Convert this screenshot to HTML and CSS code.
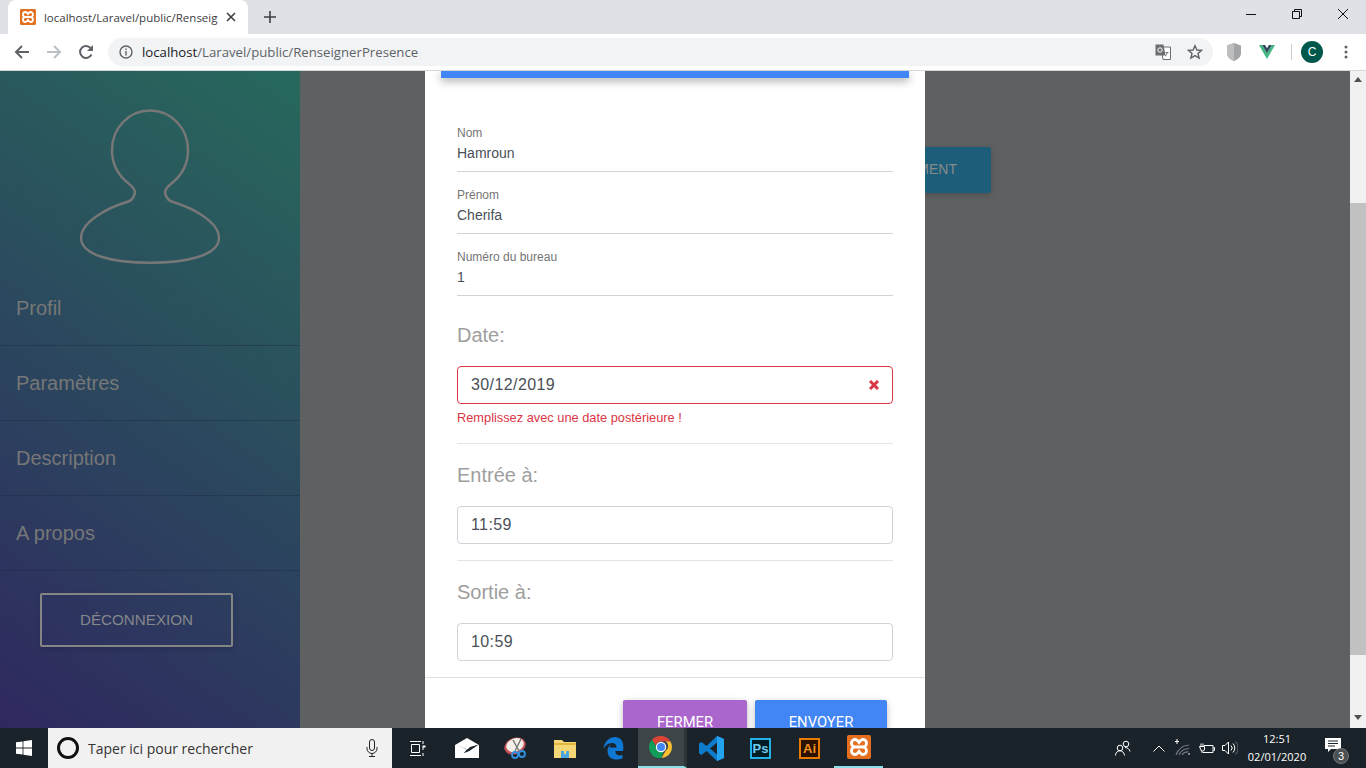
FILE: index.html
```html
<!DOCTYPE html>
<html>
<head>
	<meta charset="utf-8">
	<link rel="stylesheet" href="styles.css">
	<title>localhost/Laravel/public/RenseignerPresence</title>
</head>
<body>
	<svg class="defs" width="0" height="0">
		<symbol id="xampp" viewBox="0 0 24 24">
			<rect width="24" height="24" rx="2" fill="#e4701f"/>
			<path d="M12 7.500C11 6 10 4.500 8 4.500 5.800 4.500 4.500 6.300 4.500 8.200 4.500 10.200 6 12 8 12 6 12 4.500 13.800 4.500 15.800 4.500 17.700 5.800 19.500 8 19.500 10 19.500 11 18 12 16.500 13 18 14 19.500 16 19.500 18.200 19.500 19.500 17.700 19.500 15.800 19.500 13.800 18 12 16 12 18 12 19.500 10.200 19.500 8.200 19.500 6.300 18.200 4.500 16 4.500 14 4.500 13 6 12 7.500ZM8 12h8" fill="none" stroke="#fff" stroke-width="2.800"/>
		</symbol>
	</svg>

	<div class="tabstrip">
		<div class="tab">
			<svg class="favicon" width="16" height="16"><use href="#xampp"/></svg>
			<span class="tab_title">localhost/Laravel/public/Renseign</span>
			<svg class="tab_close" width="10" height="10" viewBox="0 0 10 10"><path d="M1 1l8 8M9 1l-8 8" stroke="#3c4043" stroke-width="1.600"/></svg>
		</div>
		<svg class="new_tab" width="12" height="12" viewBox="0 0 12 12"><path d="M6 0v12M0 6h12" stroke="#3c4043" stroke-width="1.600"/></svg>
		<div class="win_controls">
			<div class="win_btn"><svg width="10" height="10" viewBox="0 0 10 10"><path d="M0 5.500h10" stroke="#111"/></svg></div>
			<div class="win_btn"><svg width="10" height="10" viewBox="0 0 10 10"><path d="M.5 2.500h7v7h-7zM2.500 2.500v-2h7v7h-2" fill="none" stroke="#111"/></svg></div>
			<div class="win_btn"><svg width="10" height="10" viewBox="0 0 10 10"><path d="M0 0l10 10M10 0L0 10" stroke="#111"/></svg></div>
		</div>
	</div>

	<div class="toolbar">
		<svg class="nav_icon" width="16" height="16" viewBox="0 0 16 16"><path d="M15 8H2M8 2L2 8l6 6" fill="none" stroke="#5f6368" stroke-width="2"/></svg>
		<svg class="nav_icon" width="16" height="16" viewBox="0 0 16 16"><path d="M1 8h13M8 2l6 6-6 6" fill="none" stroke="#bdc1c6" stroke-width="2"/></svg>
		<svg class="nav_icon" width="16" height="16" viewBox="0 0 16 16"><path d="M13.500 10.500A6 6 0 1 1 13 4.500" fill="none" stroke="#5f6368" stroke-width="2"/><path d="M15 1v6H9z" fill="#5f6368"/></svg>
		<div class="address">
			<svg width="14" height="14" viewBox="0 0 14 14"><circle cx="7" cy="7" r="6" fill="none" stroke="#5f6368" stroke-width="1.400"/><path d="M7 6v4.500M7 3.500v1.500" stroke="#5f6368" stroke-width="1.400"/></svg>
			<span class="url"><b>localhost</b>/Laravel/public/RenseignerPresence</span>
			<svg class="translate" width="16" height="16" viewBox="0 0 16 16"><path d="M6 3h9.500v12.500H8z" fill="#fff" stroke="#6b6e72"/><path d="M.5.500h8l2 11H.5z" fill="#6b6e72"/><circle cx="5" cy="6" r="2.200" fill="none" stroke="#fff"/><path d="M10.500 8.500h3M12 8.500c0 2-1 3-2 3.500" fill="none" stroke="#6b6e72"/></svg>
			<svg class="star" width="16" height="16" viewBox="0 0 16 16"><path d="M8 1.700l1.900 4.300 4.600.4-3.500 3 1.100 4.600L8 11.600 3.900 14 5 9.400l-3.500-3 4.600-.4z" fill="none" stroke="#5f6368" stroke-width="1.400"/></svg>
		</div>
		<svg class="shield" width="14" height="18" viewBox="0 0 14 18"><path d="M7 0l7 2.500v8C14 14 10 17 7 18 4 17 0 14 0 10.500v-8z" fill="#a3a5a7"/><path d="M7 0v18C4 17 0 14 0 10.500v-8z" fill="#bcbebf"/></svg>
		<svg class="vue" width="16" height="14" viewBox="0 0 16 14"><path d="M0 0h3.200L8 8.300 12.800 0H16L8 14z" fill="#41b883"/><path d="M3.200 0h2.900L8 3.300 9.900 0h2.900L8 8.300z" fill="#35495e"/></svg>
		<div class="tool_sep"></div>
		<div class="avatar">C</div>
		<svg class="dots" width="4" height="14" viewBox="0 0 4 14"><circle cx="2" cy="2" r="1.500" fill="#5f6368"/><circle cx="2" cy="7" r="1.500" fill="#5f6368"/><circle cx="2" cy="12" r="1.500" fill="#5f6368"/></svg>
	</div>

	<div class="viewport">
		<div class="sidebar">
			<svg class="silhouette" width="140" height="156" viewBox="0 0 140 156">
				<path d="M70 1.500C49 1.500 32 19 32 41 32 55 38 66 48 74 54 79 56 82 54.300 86 53 90 51 92 47 93 30 98 1 112 1 129 1 146 32 153.700 70 153.700 108 153.700 139 146 139 129 139 112 110 98 93 93 89 92 87 90 85.700 86 84 82 86 79 92 74 102 66 108 55 108 41 108 19 91 1.500 70 1.500Z" fill="none" stroke="#777" stroke-width="2.500"/>
			</svg>
			<div class="menu_item">Profil</div>
			<div class="menu_item">Paramètres</div>
			<div class="menu_item">Description</div>
			<div class="menu_item">A propos</div>
			<div class="logout">DÉCONNEXION</div>
		</div>

		<div class="page">
			<div class="bg_button">MENT</div>
			<div class="modal">
				<div class="modal_bar"></div>
				<div class="modal_body">
					<div class="field">
						<div class="field_label">Nom</div>
						<div class="field_value">Hamroun</div>
					</div>
					<div class="field">
						<div class="field_label">Prénom</div>
						<div class="field_value">Cherifa</div>
					</div>
					<div class="field">
						<div class="field_label">Numéro du bureau</div>
						<div class="field_value">1</div>
					</div>

					<div class="group_title first">Date:</div>
					<div class="box invalid">
						<span>30/12/2019</span>
						<svg width="10" height="10" viewBox="0 0 10 10"><path d="M1 1l8 8M9 1l-8 8" stroke="#dc3545" stroke-width="3"/></svg>
					</div>
					<div class="error">Remplissez avec une date postérieure !</div>
					<div class="rule"></div>

					<div class="group_title">Entrée à:</div>
					<div class="box"><span>11:59</span></div>
					<div class="rule near"></div>

					<div class="group_title">Sortie à:</div>
					<div class="box"><span>10:59</span></div>
				</div>
				<div class="modal_footer">
					<div class="btn purple">FERMER</div>
					<div class="btn blue">ENVOYER</div>
				</div>
			</div>
		</div>

		<div class="scrollbar">
			<div class="arrow_up"></div>
			<div class="thumb"></div>
			<div class="arrow_down"></div>
		</div>
	</div>

	<div class="taskbar">
		<div class="start">
			<svg width="16" height="16" viewBox="0 0 16 16"><path d="M0 2.300l6.600-.9v6.200H0zM7.400 1.300L16 0v7.600H7.400zM0 8.400h6.600v6.200L0 13.700zM7.400 8.400H16V16l-8.600-1.300z" fill="#fff"/></svg>
		</div>
		<div class="search">
			<div class="cortana"></div>
			<span>Taper ici pour rechercher</span>
			<svg class="mic" width="12" height="18" viewBox="0 0 12 18"><rect x="3.500" y=".5" width="5" height="11" rx="2.500" fill="none" stroke="#222"/><path d="M1 8v1.500a5 5 0 0 0 10 0V8M6 14.500V17M3 17.500h6" fill="none" stroke="#222"/></svg>
		</div>
		<div class="task_icons">
			<div class="task_icon"><svg width="16" height="15" viewBox="0 0 16 15"><path d="M0 .5h11M0 14.500h11M1.500 3.500h8v8h-8zM13 0v3M13 6v3M13 12v3" fill="none" stroke="#fff"/><path d="M12.500 4.500h3v2h-3z" fill="#fff"/></svg></div>
			<div class="task_icon"><svg width="24" height="20" viewBox="0 0 24 20"><path d="M0 7L12 0l12 7v13H0z" fill="#fff"/><path d="M0 6.500l15 6-6 2.500 3-3.500z" fill="#1a2329"/><path d="M24 6.500l-9 6-6 2.500 6-6z" fill="#1a2329"/></svg></div>
			<div class="task_icon"><svg width="24" height="24" viewBox="0 0 24 24"><ellipse cx="11" cy="10" rx="11" ry="8" fill="#c9545c" transform="rotate(-22 11 10)"/><ellipse cx="11" cy="9" rx="9" ry="6.500" fill="#f3eee8" transform="rotate(-22 11 9)"/><path d="M9 4l6 11M17 3L11 15" stroke="#777" stroke-width="1.400"/><circle cx="11" cy="19" r="3" fill="none" stroke="#2f8fe0" stroke-width="1.800"/><circle cx="18" cy="18" r="3" fill="none" stroke="#2f8fe0" stroke-width="1.800"/></svg></div>
			<div class="task_icon"><svg width="22" height="20" viewBox="0 0 22 20"><path d="M0 2h8l2 2h12v16H0z" fill="#f6d775"/><path d="M0 5h22v2H0z" fill="#e2b53e"/><path d="M7 13h8v7H7z" fill="#4aa7e0"/><path d="M10 13h2v3h-2z" fill="#f6d775"/></svg></div>
			<div class="task_icon"><svg width="21" height="23" viewBox="0 0 21 23"><path d="M20 14h-7.500c-.5 3 2 5.500 7 4v3.500c-7 2.700-15 .5-15-7.500 0-3 1.500-5.500 4-7-1 1-1.700 2-2 3.500h7C13.500 8 12 6 9 6 5 6 2 9 .5 12 1 5 6 0 12 0c6 0 9.500 5 8 14z" fill="#0f78d4"/></svg></div>
			<div class="task_icon active">
				<svg width="24" height="24" viewBox="0 0 24 24"><path d="M12 1a11 11 0 0 1 9.500 5.500H12a5.500 5.500 0 0 0-5.300 4L3 4.700A11 11 0 0 1 12 1z" fill="#db4437"/><path d="M21.500 6.500A11 11 0 0 1 12.500 23l4.300-7.500a5.500 5.500 0 0 0 0-9z" fill="#fbc02d"/><path d="M3 4.700l4.700 8.100a5.500 5.500 0 0 0 6.800 3.600L12.500 23A11 11 0 0 1 3 4.700z" fill="#0f9d58"/><circle cx="12" cy="12" r="5.200" fill="#fff"/><circle cx="12" cy="12" r="4" fill="#4285f4"/></svg>
			</div>
			<div class="task_icon"><svg width="25" height="25" viewBox="0 0 25 25"><path d="M18 0l7 3v19l-7 3L7.500 15 2.500 19 0 17.500v-10L2.500 6l5 4z" fill="#0e7bcc"/><path d="M18 0l7 3v19l-7 3z" fill="#23a3ee"/><path d="M18 6.500v12L11 12.500z" fill="#1a2329"/></svg></div>
			<div class="task_icon"><div class="adobe ps">Ps</div></div>
			<div class="task_icon"><div class="adobe ai">Ai</div></div>
			<div class="task_icon open"><svg width="24" height="24"><use href="#xampp"/></svg></div>
		</div>
		<div class="tray">
			<svg class="people" width="16" height="16" viewBox="0 0 16 16"><circle cx="11" cy="4" r="2.800" fill="none" stroke="#fff"/><circle cx="5" cy="8" r="2.800" fill="none" stroke="#fff"/><path d="M.5 15.500c0-3 2-4.700 4.500-4.700s4 1.700 4.500 4.700M10 7.500c2.500 0 4.500 1.500 5 4" fill="none" stroke="#fff"/></svg>
			<svg class="chevron" width="12" height="7" viewBox="0 0 12 7"><path d="M.5 6.500L6 1l5.500 5.500" fill="none" stroke="#fff"/></svg>
			<svg class="wifi" width="16" height="16" viewBox="0 0 16 16"><path d="M1 16A15 15 0 0 1 14 6M4 16A11 11 0 0 1 14 9.500M7 16a7 7 0 0 1 6.500-3" fill="none" stroke="#778" stroke-width="1.200"/><circle cx="14" cy="15" r="1" fill="#aab"/><path d="M1 0v5M-1 2.500h4" stroke="#fff" transform="translate(1 0)"/></svg>
			<svg class="battery" width="16" height="11" viewBox="0 0 16 11"><path d="M5 2.500h9v7H4M14.500 4.500h1v3h-1M2 .5v3M4 .5v3M.5 3.500h5V6a2 2 0 0 1-4 0zM3 8v2" fill="none" stroke="#fff"/></svg>
			<svg class="sound" width="16" height="14" viewBox="0 0 16 14"><path d="M.5 4.500h2.500L6.500 1v12L3 9.500H.5zM9 4.500a3.500 3.500 0 0 1 0 5M11 2.500a6.500 6.500 0 0 1 0 9" fill="none" stroke="#fff"/><path d="M13.500 .5a9.500 9.500 0 0 1 0 13" fill="none" stroke="#667"/></svg>
			<div class="clock">
				<div>12:51</div>
				<div>02/01/2020</div>
			</div>
			<div class="notif">
				<svg width="16" height="14" viewBox="0 0 16 14"><path d="M0 0h16v11H6l-3 3v-3H0z" fill="#fff"/><path d="M3 3h10M3 5.500h10M3 8h7" stroke="#1a2329"/></svg>
				<div class="notif_count">3</div>
			</div>
		</div>
	</div>
</body>
</html>
```

FILE: styles.css
```css
* {
	box-sizing: border-box;
}
html, body {
	height: 100%;
}
body {
	margin: 0;
	display: flex;
	flex-direction: column;
	overflow: hidden;
	font-family: "Liberation Sans", sans-serif;
}
.defs {
	position: absolute;
}

/* browser */
.tabstrip {
	height: 34px;
	background: #dee1e6;
	display: flex;
	align-items: center;
	padding-left: 8px;
	flex-shrink: 0;
}
.tab {
	width: 240px;
	height: 34px;
	background: #fff;
	border-radius: 8px 8px 0 0;
	display: flex;
	align-items: center;
	padding: 0 12px;
}
.tab_title {
	margin-left: 8px;
	width: 175px;
	overflow: hidden;
	white-space: nowrap;
	font-family: "Open Sans", sans-serif;
	font-size: 11.500px;
	color: #3c4043;
}
.tab_close {
	margin-left: 8px;
	flex-shrink: 0;
}
.new_tab {
	margin-left: 16px;
}
.win_controls {
	margin-left: auto;
	display: flex;
}
.win_btn {
	width: 46px;
	height: 28px;
	display: flex;
	align-items: center;
	justify-content: center;
	margin-top: -6px;
}

.toolbar {
	height: 37px;
	background: #fff;
	border-bottom: 1px solid #d6d7da;
	display: flex;
	align-items: center;
	padding-left: 14px;
	flex-shrink: 0;
}
.nav_icon {
	margin-right: 16px;
}
.address {
	width: 1105px;
	height: 28px;
	margin-left: -2px;
	background: #f1f3f4;
	border-radius: 14px;
	display: flex;
	align-items: center;
	padding: 0 10px 0 11px;
}
.url {
	margin-left: 9px;
	font-family: "Open Sans", sans-serif;
	font-size: 13.200px;
	color: #5f6368;
}
.url b {
	font-weight: normal;
	color: #202124;
}
.translate {
	margin-left: auto;
}
.star {
	margin-left: 16px;
}
.shield {
	margin-left: 14px;
}
.vue {
	margin-left: 18px;
}
.tool_sep {
	width: 1px;
	height: 16px;
	background: #ccc;
	margin-left: 16px;
}
.avatar {
	width: 22px;
	height: 22px;
	border-radius: 50%;
	background: #00574b;
	color: #fff;
	font-size: 12px;
	line-height: 22px;
	text-align: center;
	margin-left: 9px;
}
.dots {
	margin-left: 21px;
}

/* page */
.viewport {
	flex: 1;
	display: flex;
	min-height: 0;
}
.sidebar {
	width: 300px;
	flex-shrink: 0;
	background: linear-gradient(35deg, #2f2860 0%, #27695c 100%);
	display: flex;
	flex-direction: column;
	padding-top: 38px;
}
.silhouette {
	margin: 0 0 6px 80px;
	display: block;
}
.menu_item {
	height: 75px;
	line-height: 74px;
	padding-left: 16px;
	border-bottom: 1px solid rgba(30, 40, 60, .4);
	font-size: 20px;
	color: #777;
}
.logout {
	width: 193px;
	height: 54px;
	margin: 22px 0 0 40px;
	border: 2px solid #858585;
	border-radius: 2px;
	color: #85878c;
	font-size: 15.200px;
	line-height: 50px;
	text-align: center;
	box-shadow: 0 2px 5px rgba(0, 0, 0, .15);
}

.page {
	flex: 1;
	background: #5f6061;
	position: relative;
	overflow: hidden;
}
.bg_button {
	position: absolute;
	left: 525px;
	top: 76px;
	width: 166px;
	height: 46px;
	padding-right: 34px;
	border-radius: 2px;
	text-align: right;
	line-height: 44px;
	background: #1c5e79;
	color: #868a8c;
	font-size: 14px;
	box-shadow: 0 2px 6px rgba(0, 0, 0, .2);
}
.modal {
	position: absolute;
	left: 125px;
	top: 0;
	width: 500px;
	height: 700px;
	background: #fff;
}
.modal_bar {
	height: 7px;
	margin: 0 16px;
	background: #4285f4;
	box-shadow: 0 3px 8px rgba(0, 0, 0, .35);
}
.modal_body {
	padding: 48px 32px 16px;
	border-bottom: 1px solid #dee2e6;
}
.field {
	height: 62px;
	border-bottom: 1px solid #ced4da;
}
.field_label {
	font-size: 12px;
	line-height: 14px;
	color: #757575;
}
.field_value {
	font-size: 14px;
	line-height: 16px;
	margin-top: 5px;
	color: #495057;
}
.field + .field {
	margin-top: 0;
	padding-top: 16px;
	height: 62px;
}
.field:first-child {
	height: 46px;
}
.group_title {
	font-size: 20px;
	line-height: 24px;
	color: #9e9e9e;
	margin-bottom: 19px;
}
.group_title.first {
	margin-top: 27px;
}
.box {
	height: 38px;
	border: 1px solid #ced4da;
	border-radius: 4px;
	display: flex;
	align-items: center;
	justify-content: space-between;
	padding: 0 13px;
	font-size: 16px;
	letter-spacing: .4px;
	color: #495057;
}
.box.invalid {
	border-color: #dc3545;
}
.error {
	font-size: 12.800px;
	line-height: 14px;
	margin-top: 7px;
	color: #dc3545;
}
.rule {
	height: 1px;
	background: #e4e4e4;
	margin: 18px 0 19px;
}
.rule.near {
	margin: 16px 0 19px;
}
.modal_footer {
	display: flex;
	justify-content: flex-end;
	gap: 8px;
	padding: 22px 38px 0 0;
}
.btn {
	height: 46px;
	border-radius: 2px;
	text-align: center;
	font-family: Roboto, sans-serif;
	font-size: 14.800px;
	line-height: 44px;
	color: #fff;
	box-shadow: 0 2px 5px rgba(0, 0, 0, .16), 0 2px 10px rgba(0, 0, 0, .12);
}
.btn.purple {
	width: 124px;
	background: #aa66cc;
}
.btn.blue {
	width: 132px;
	background: #4285f4;
}

.scrollbar {
	width: 16px;
	flex-shrink: 0;
	background: #f1f1f1;
	display: flex;
	flex-direction: column;
	align-items: center;
}
.arrow_up {
	width: 0;
	margin-top: 6px;
	border: 4px solid transparent;
	border-top: 0;
	border-bottom: 5px solid #505050;
}
.thumb {
	width: 16px;
	height: 452px;
	margin-top: 121px;
	background: #c1c1c1;
}
.arrow_down {
	width: 0;
	margin-top: 60px;
	border: 4px solid transparent;
	border-bottom: 0;
	border-top: 5px solid #505050;
}

/* windows taskbar */
.taskbar {
	height: 40px;
	background: #1a2329;
	display: flex;
	align-items: center;
	flex-shrink: 0;
	color: #fff;
}
.start {
	width: 48px;
	display: flex;
	justify-content: center;
}
.search {
	width: 344px;
	height: 40px;
	background: #f1f1f1;
	display: flex;
	align-items: center;
	padding: 0 14px 0 9px;
	font-family: "Open Sans", sans-serif;
	font-size: 14px;
	color: #333;
}
.cortana {
	width: 22px;
	height: 22px;
	border: 3px solid #111;
	border-radius: 50%;
	margin-right: 9px;
}
.mic {
	margin-left: auto;
}
.task_icons {
	display: flex;
	margin-left: 1px;
}
.task_icon {
	width: 49px;
	height: 40px;
	display: flex;
	align-items: center;
	justify-content: center;
	position: relative;
}
.task_icon.active {
	background: #3d4548;
	border-bottom: 2px solid #8be0e8;
	border-right: 3px solid #2d3539;
}
.task_icon.open {
	border-bottom: 2px solid #8be0e8;
}
.adobe {
	width: 21px;
	height: 21px;
	border: 2px solid;
	background: #001d26;
	font-size: 13px;
	font-weight: bold;
	line-height: 17px;
	text-align: center;
}
.ps {
	border-color: #1fb1e8;
	color: #6fcdf0;
}
.ai {
	border-color: #e97b00;
	background: #2b1100;
	color: #f2901b;
}
.tray {
	margin-left: auto;
	display: flex;
	align-items: center;
}
.people {
	margin-right: 22px;
}
.chevron {
	margin-right: 10px;
}
.wifi {
	margin-right: 8px;
	margin-top: -2px;
}
.battery {
	margin-right: 7px;
}
.sound {
	margin-right: 4px;
}
.clock {
	width: 70px;
	text-align: center;
	font-family: "Open Sans", sans-serif;
	font-size: 11px;
	line-height: 18px;
}
.notif {
	width: 48px;
	height: 40px;
	position: relative;
	display: flex;
	align-items: center;
	justify-content: center;
	margin-left: 6px;
	padding-right: 18px;
	padding-bottom: 6px;
}
.notif_count {
	position: absolute;
	right: 17px;
	bottom: 4px;
	width: 16px;
	height: 16px;
	border-radius: 50%;
	background: #4a4f52;
	border: 1px solid #777;
	font-size: 11px;
	line-height: 14px;
	text-align: center;
}
```
